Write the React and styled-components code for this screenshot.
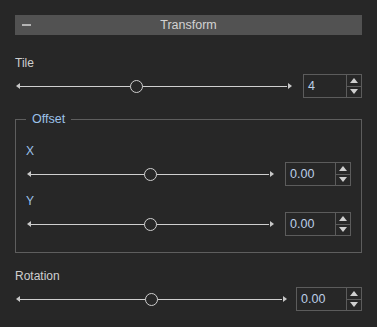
import React from "react";
import styled, { createGlobalStyle } from "styled-components";

const GlobalStyle = createGlobalStyle`
  html, body {
    margin: 0;
    padding: 0;
    background: #272727;
  }
  body {
    font-family: "Liberation Sans", Arial, sans-serif;
    font-size: 12px;
  }
`;

const Panel = styled.div`
  width: 377px;
  height: 327px;
  box-sizing: border-box;
  padding: 15px;
  background: #272727;
  display: flex;
  flex-direction: column;
`;

const Header = styled.div`
  position: relative;
  height: 20px;
  background: #525252;
  display: flex;
  align-items: center;
  justify-content: center;
  color: #d2d2d2;
  font-size: 12.5px;
`;

const Collapse = styled.span`
  position: absolute;
  left: 7px;
  top: 9px;
  width: 9px;
  height: 2px;
  background: #b4b4b4;
`;

const Section = styled.div`
  margin-top: ${(p) => p.$top || 0}px;
  display: flex;
  flex-direction: column;
`;

const Label = styled.div`
  height: 14px;
  line-height: 14px;
  color: ${(p) => (p.$accent ? "#9cc2ea" : "#cfcfcf")};
  margin-bottom: 4px;
`;

const Row = styled.div`
  display: flex;
  align-items: center;
  gap: ${(p) => p.$gap}px;
`;

const SliderWrap = styled.div`
  flex: 1;
  display: flex;
  align-items: center;
  height: 24px;
  padding-left: 1px;
`;

const ArrowLeft = styled.span`
  width: 0;
  height: 0;
  border-top: 3px solid transparent;
  border-bottom: 3px solid transparent;
  border-right: 4px solid #c8c8c8;
`;

const ArrowRight = styled.span`
  width: 0;
  height: 0;
  border-top: 3px solid transparent;
  border-bottom: 3px solid transparent;
  border-left: 4px solid #c8c8c8;
`;

const Track = styled.div`
  position: relative;
  flex: 1;
  height: 1px;
  background: #cfcfcf;
  margin: 0 1px 0 0;
`;

const Knob = styled.span`
  position: absolute;
  top: -6px;
  width: 13px;
  height: 13px;
  margin-left: -6.5px;
  box-sizing: border-box;
  border-radius: 50%;
  border: 1.5px solid #cfcfcf;
  background: #272727;
`;

const Spin = styled.div`
  width: ${(p) => p.$w}px;
  height: 24px;
  box-sizing: border-box;
  border: 1px solid #5c5c5c;
  display: flex;
`;

const SpinValue = styled.div`
  flex: 1;
  padding-left: 4px;
  display: flex;
  align-items: center;
  color: #bccfe8;
  font-size: 12.5px;
`;

const SpinButtons = styled.div`
  width: 14px;
  border-left: 1px solid #5c5c5c;
  display: flex;
  flex-direction: column;
`;

const SpinButton = styled.div`
  flex: 1;
  display: flex;
  align-items: center;
  justify-content: center;
  & + & {
    border-top: 1px solid #5c5c5c;
  }
  &::after {
    content: "";
    width: 0;
    height: 0;
    border-left: 4px solid transparent;
    border-right: 4px solid transparent;
    ${(p) =>
      p.$up
        ? "border-bottom: 5px solid #d0d0d0;"
        : "border-top: 5px solid #d0d0d0;"}
  }
`;

const Group = styled.fieldset`
  margin: 14px 0 0;
  padding: 10px 10px 16px;
  border: 1px solid #5e5e5e;
  min-width: 0;
`;

const Legend = styled.legend`
  margin-left: 0;
  padding: 0 6px;
  color: #9cc2ea;
  font-size: 12.5px;
  line-height: 14px;
`;

function Slider({ value }) {
  return (
    <SliderWrap>
      <ArrowLeft />
      <Track>
        <Knob style={{ left: `${value}%` }} />
      </Track>
      <ArrowRight />
    </SliderWrap>
  );
}

function SpinBox({ value, width }) {
  return (
    <Spin $w={width}>
      <SpinValue>{value}</SpinValue>
      <SpinButtons>
        <SpinButton $up />
        <SpinButton />
      </SpinButtons>
    </Spin>
  );
}

function Field({ label, accent, value, pos, spinWidth, gap, top }) {
  return (
    <Section $top={top}>
      <Label $accent={accent}>{label}</Label>
      <Row $gap={gap}>
        <Slider value={pos} />
        <SpinBox value={value} width={spinWidth} />
      </Row>
    </Section>
  );
}

export default function App() {
  return (
    <>
      <GlobalStyle />
      <Panel>
        <Header>
          <Collapse />
          Transform
        </Header>
        <Field label="Tile" value="4" pos={43.5} spinWidth={59} gap={11} top={21} />
        <Group>
          <Legend>Offset</Legend>
          <Field label="X" accent value="0.00" pos={50} spinWidth={66} gap={11} top={8} />
          <Field label="Y" accent value="0.00" pos={50} spinWidth={66} gap={11} top={8} />
        </Group>
        <Field label="Rotation" value="0.00" pos={50} spinWidth={66} gap={9} top={16} />
      </Panel>
    </>
  );
}
